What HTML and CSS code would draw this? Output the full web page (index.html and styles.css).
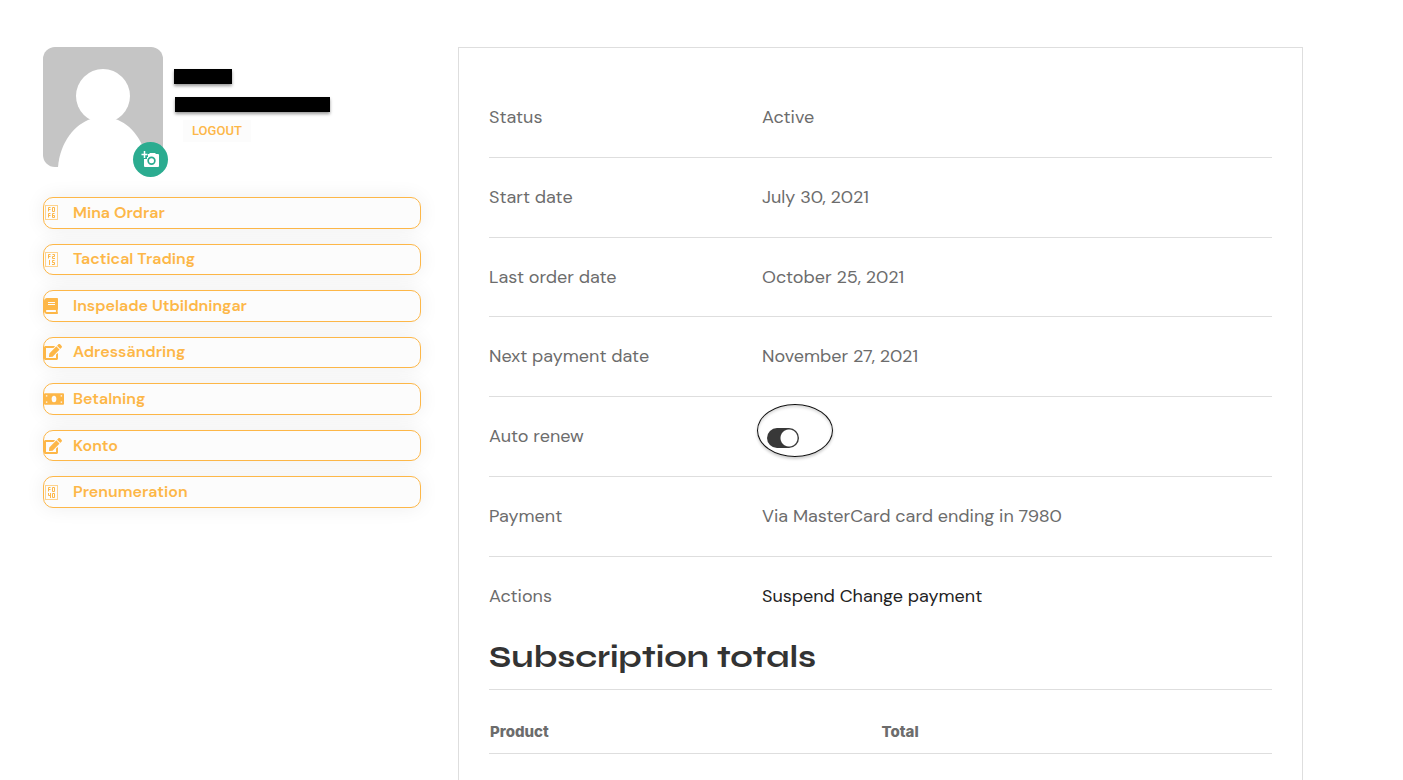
FILE: index.html
```html
<!DOCTYPE html>
<html lang="sv">
<head>
<meta charset="utf-8">
<meta name="viewport" content="width=device-width, initial-scale=1">
<title>Prenumeration</title>
<link rel="stylesheet" href="styles.css">
</head>
<body>
<svg class="sprite" aria-hidden="true">
  <symbol id="edit" viewBox="0 0 576 512"><path d="M402.6 83.2l90.2 90.2c3.800 3.800 3.800 10 0 13.800L274.400 405.600l-92.800 10.300c-12.400 1.400-22.900-9.100-21.500-21.500l10.300-92.800L388.800 83.200c3.800-3.800 10-3.800 13.800 0zm162-22.900l-48.800-48.800c-15.200-15.200-39.900-15.200-55.200 0l-35.400 35.400c-3.800 3.800-3.800 10 0 13.800l90.200 90.200c3.800 3.800 10 3.800 13.800 0l35.400-35.400c15.200-15.300 15.200-40 0-55.200zM384 346.200V448H64V128h229.800c3.200 0 6.200-1.300 8.500-3.500l40-40c7.600-7.600 2.200-20.500-8.500-20.500H48C21.500 64 0 85.500 0 112v352c0 26.500 21.500 48 48 48h352c26.500 0 48-21.500 48-48V306.200c0-10.700-12.900-16-20.500-8.500l-40 40c-2.200 2.300-3.500 5.300-3.500 8.500z"/></symbol>
  <symbol id="book" viewBox="0 0 448 512"><path d="M448 360V24c0-13.300-10.700-24-24-24H96C43 0 0 43 0 96v320c0 53 43 96 96 96h328c13.300 0 24-10.700 24-24v-16c0-7.500-3.500-14.300-8.900-18.700-4.200-15.400-4.200-59.300 0-74.700 5.400-4.300 8.900-11.100 8.900-18.600zM128 134c0-3.300 2.700-6 6-6h212c3.300 0 6 2.700 6 6v20c0 3.300-2.700 6-6 6H134c-3.300 0-6-2.700-6-6v-20zm0 64c0-3.300 2.700-6 6-6h212c3.300 0 6 2.700 6 6v20c0 3.300-2.700 6-6 6H134c-3.300 0-6-2.700-6-6v-20zm253.400 250H96c-17.700 0-32-14.300-32-32 0-17.600 14.400-32 32-32h285.400c-1.900 17.100-1.900 46.900 0 64z"/></symbol>
  <symbol id="bill" viewBox="0 0 21 14"><path fill-rule="evenodd" d="M1 1h19q1 0 1 1v10q0 1-1 1H1q-1 0-1-1V2q0-1 1-1zM10.500 3.500C8.800 3.500 8 5 8 7s.8 3.500 2.500 3.500S13 9 13 7s-.8-3.500-2.500-3.500zM2 3v1.500h1.500V3zM17.500 3v1.500H19V3zM2 9.500V11h1.500V9.500zM17.500 9.500V11H19V9.500z"/></symbol>
</svg>
<div class="page">
  <aside class="sidebar">
    <div class="profile">
      <div class="avatar">
        <svg class="avatar-image" viewBox="0 0 120 120" role="img" aria-label="Profile picture">
          <rect width="120" height="120" fill="#c5c5c5"/>
          <circle cx="60" cy="49" r="27" fill="#fff"/>
          <path d="M15 120C17 95 32 77 48 72h24c16 5 30 22 33 48z" fill="#fff"/>
        </svg>
        <button class="photo-button" type="button" aria-label="Change photo">
          <svg viewBox="0 0 20 18" width="20" height="18" aria-hidden="true">
            <path fill="#fff" fill-rule="evenodd" d="M7 3h1l1-1h5l1 1h2q1 0 1 1v11q0 1-1 1H4q-1 0-1-1V8h3V6h1zM10.500 5.500a4.200 4.200 0 1 0 0 8.400 4.200 4.200 0 0 0 0-8.400zM10.500 7.200a2.500 2.500 0 1 1 0 5 2.500 2.500 0 0 1 0-5z"/>
            <path d="M3.500 0v7M.5 3.500h6" stroke="#fff" stroke-width="1.500"/>
          </svg>
        </button>
      </div>
      <div class="identity">
        <span class="redacted redacted-name"></span>
        <span class="redacted redacted-mail"></span>
        <a class="logout" href="#">LOGOUT</a>
      </div>
    </div>
    <nav class="menu">
      <a href="#"><span class="icon"><svg class="glyph" width="13" height="15" viewBox="0 0 13 15"><rect x=".5" y=".5" width="12" height="14"/><path d="M5.500 2.500h-2v4M3.500 4.500h2M7.500 2.500h2v4h-2zM5.500 8.500h-2v4M3.500 10.500h2M9.500 8.500h-2v4h2v-2h-2"/></svg></span>Mina Ordrar</a>
      <a href="#"><span class="icon"><svg class="glyph" width="13" height="15" viewBox="0 0 13 15"><rect x=".5" y=".5" width="12" height="14"/><path d="M5.500 2.500h-2v4M3.500 4.500h2M7.500 2.500h2v2h-2v2h2.500M4.500 8v5M9.500 8.500h-2v2h2v2h-2.500"/></svg></span>Tactical Trading</a>
      <a href="#"><span class="icon"><svg class="solid" width="14" height="16"><use href="#book"/></svg></span>Inspelade Utbildningar</a>
      <a href="#"><span class="icon"><svg class="solid" width="18" height="16"><use href="#edit"/></svg></span>Adressändring</a>
      <a href="#"><span class="icon"><svg class="solid" width="20" height="14"><use href="#bill"/></svg></span>Betalning</a>
      <a href="#"><span class="icon"><svg class="solid" width="18" height="16"><use href="#edit"/></svg></span>Konto</a>
      <a href="#"><span class="icon"><svg class="glyph" width="13" height="15" viewBox="0 0 13 15"><rect x=".5" y=".5" width="12" height="14"/><path d="M5.500 2.500h-2v4M3.500 4.500h2M7.500 2.500h2v4h-2zM3.500 8v2.500h2.500M5.500 8v5M7.500 8.500h2v4h-2z"/></svg></span>Prenumeration</a>
    </nav>
  </aside>
  <main class="card">
    <table class="details">
      <tbody>
        <tr><th scope="row">Status</th><td>Active</td></tr>
        <tr><th scope="row">Start date</th><td>July 30, 2021</td></tr>
        <tr><th scope="row">Last order date</th><td>October 25, 2021</td></tr>
        <tr><th scope="row">Next payment date</th><td>November 27, 2021</td></tr>
        <tr><th scope="row"><label for="renew">Auto renew</label></th><td><span class="renew"><input class="toggle" id="renew" type="checkbox" checked><span class="ring"></span></span></td></tr>
        <tr><th scope="row">Payment</th><td>Via MasterCard card ending in 7980</td></tr>
        <tr><th scope="row">Actions</th><td><a href="#">Suspend</a> <a href="#">Change payment</a></td></tr>
      </tbody>
    </table>
    <h2>Subscription totals</h2>
    <table class="totals">
      <thead><tr><th scope="col">Product</th><th scope="col">Total</th></tr></thead>
    </table>
  </main>
</div>
</body>
</html>
```
FILE: styles.css
```css
* { box-sizing: border-box; }
body {
  margin: 0;
  background: #fff;
  color: #6c6c6c;
  font: 400 18px/24px "DM Sans", Inter, "Liberation Sans", sans-serif;
}
a { color: inherit; text-decoration: none; }
.sprite { display: none; }
.page {
  display: grid;
  grid-template-columns: 378fr 845fr;
  gap: 37px;
  min-height: 100vh;
  padding: 47px 100px 0 43px;
}
.profile { display: flex; gap: 11px; }
.avatar { position: relative; width: 120px; height: 120px; }
.avatar-image { display: block; width: 100%; height: 100%; border-radius: 12px; }
.photo-button {
  position: absolute;
  right: -5px;
  bottom: -10px;
  display: grid;
  place-items: center;
  width: 35px;
  height: 35px;
  padding: 0;
  border: 0;
  border-radius: 50%;
  background: #2bac90;
}
.identity { display: flex; flex-direction: column; align-items: flex-start; padding-top: 22px; }
.redacted { height: 15px; background: #000; box-shadow: 0 2px 3px rgba(0, 0, 0, .4); }
.redacted-name { width: 58px; }
.redacted-mail { width: 155px; margin: 13px 0 8px 1px; }
.logout {
  margin-left: 9px;
  padding: 0 9px;
  background: #fcfcfc;
  color: #fdb748;
  font: 500 13px/22px Roboto, "Liberation Sans", sans-serif;
}
.menu {
  display: grid;
  grid-auto-rows: 1fr;
  gap: 15px;
  min-height: 311px;
  margin-top: 30px;
  color: #fdb748;
  font-size: 16px;
  font-weight: 600;
}
.menu a {
  display: flex;
  align-items: center;
  border: 1px solid #fdb748;
  border-radius: 10px;
  background: #fcfcfc;
  box-shadow: 0 0 20px rgba(0, 0, 0, .07);
}
.icon { display: flex; width: 29px; }
.solid { fill: currentColor; }
.glyph { margin-left: 1px; fill: none; stroke: currentColor; }
.glyph rect { opacity: .6; }
.card { padding: 30px; border: 1px solid #dedede; border-bottom: 0; }
table { width: 100%; border-collapse: separate; border-spacing: 0; table-layout: fixed; }
th { text-align: left; }
.details tr { height: 80px; }
.details th { width: 273px; font-weight: 400; }
.details th, .details td { padding: 0 0 1px; border-bottom: 1px solid #dedede; }
.details tr:nth-child(3), .details tr:last-child { height: 79px; }
.details tr:last-child > * { border-bottom: 0; }
.details a { color: #222; }
.renew { position: relative; display: flex; padding-left: 5px; }
.toggle {
  appearance: none;
  width: 32px;
  height: 20px;
  margin: 3px 0 0;
  border-radius: 10px;
  background: radial-gradient(circle at 22px 10px, #fff 8px, #383838 9px);
}
.ring {
  position: absolute;
  left: -5px;
  bottom: -9px;
  width: 76px;
  height: 53px;
  border: 1px solid #111;
  border-radius: 50%;
  box-shadow: 0 2px 3px rgba(0, 0, 0, .2), inset 0 2px 3px rgba(0, 0, 0, .15);
  pointer-events: none;
}
h2 {
  margin: 0;
  padding: 1px 0 12px;
  border-bottom: 1px solid #dedede;
  color: #333;
  font: 700 32px/40px Syne, "DejaVu Sans", sans-serif;
}
.totals th {
  padding: 30px 1px 9px;
  border-bottom: 1px solid #dedede;
  font: 800 15px/24px Inter, "Liberation Sans", sans-serif;
}
```
